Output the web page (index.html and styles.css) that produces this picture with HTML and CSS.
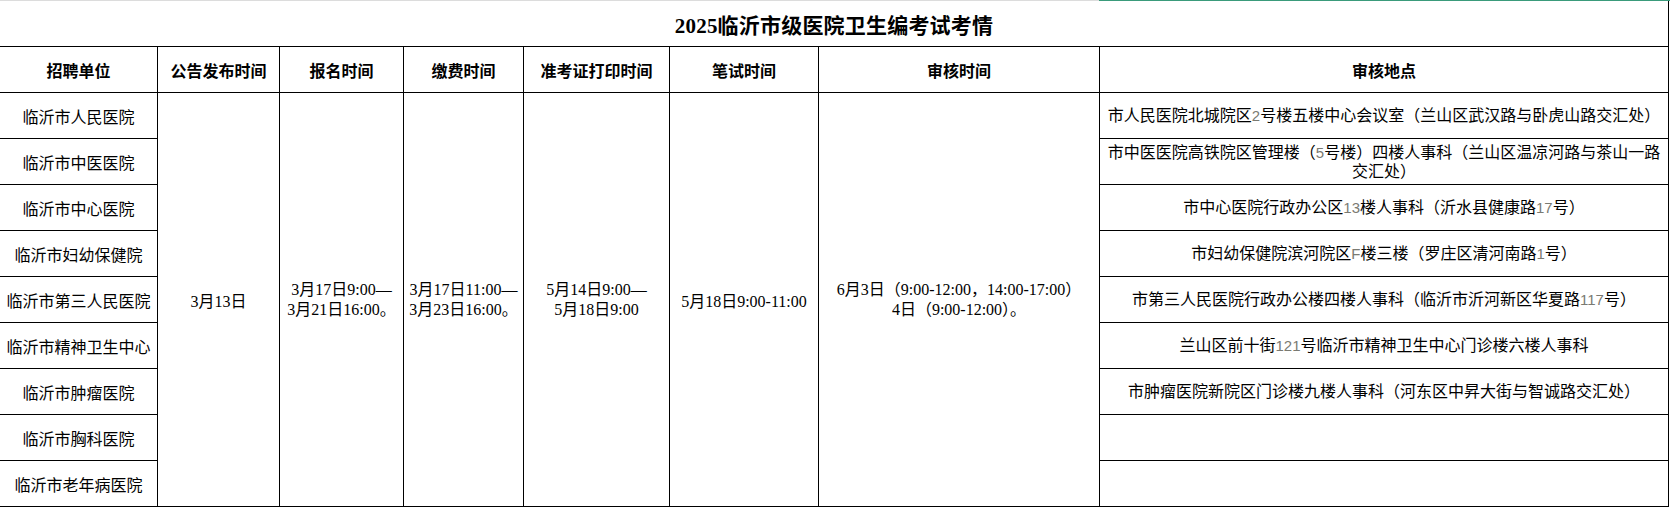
FILE: index.html
```html
<!DOCTYPE html>
<html lang="zh-CN">
<head>
<meta charset="utf-8">
<title>2025临沂市级医院卫生编考试考情</title>
<link rel="stylesheet" href="styles.css">
</head>
<body>
<div class="topbar"><div class="bar-gray"></div><div class="bar-green"></div></div>
<div class="sheet">
  <div class="cell title">2025临沂市级医院卫生编考试考情</div>

  <div class="cell head">招聘单位</div>
  <div class="cell head">公告发布时间</div>
  <div class="cell head">报名时间</div>
  <div class="cell head">缴费时间</div>
  <div class="cell head">准考证打印时间</div>
  <div class="cell head">笔试时间</div>
  <div class="cell head">审核时间</div>
  <div class="cell head">审核地点</div>

  <div class="cell c1">临沂市人民医院</div>
  <div class="cell span c2">3月13日</div>
  <div class="cell span c3 multi"><span class="txt">3月17日9:00—<br>3月21日16:00。</span></div>
  <div class="cell span c4 multi"><span class="txt">3月17日11:00—<br>3月23日16:00。</span></div>
  <div class="cell span c5 multi"><span class="txt">5月14日9:00—<br>5月18日9:00</span></div>
  <div class="cell span c6">5月18日9:00-11:00</div>
  <div class="cell span c7 multi"><span class="txt">6月3日（9:00-12:00，14:00-17:00）<br>4日（9:00-12:00）。</span></div>
  <div class="cell c8 addr"><span class="txt">市人民医院北城院区<span class="num">2</span>号楼五楼中心会议室（兰山区武汉路与卧虎山路交汇处）</span></div>

  <div class="cell c1">临沂市中医医院</div>
  <div class="cell c8 addr"><span class="txt">市中医医院高铁院区管理楼（<span class="num">5</span>号楼）四楼人事科（兰山区温凉河路与茶山一路交汇处）</span></div>

  <div class="cell c1">临沂市中心医院</div>
  <div class="cell c8 addr"><span class="txt">市中心医院行政办公区<span class="num">13</span>楼人事科（沂水县健康路<span class="num">17</span>号）</span></div>

  <div class="cell c1">临沂市妇幼保健院</div>
  <div class="cell c8 addr"><span class="txt">市妇幼保健院滨河院区<span class="num">F</span>楼三楼（罗庄区清河南路<span class="num">1</span>号）</span></div>

  <div class="cell c1">临沂市第三人民医院</div>
  <div class="cell c8 addr"><span class="txt">市第三人民医院行政办公楼四楼人事科（临沂市沂河新区华夏路<span class="num">117</span>号）</span></div>

  <div class="cell c1">临沂市精神卫生中心</div>
  <div class="cell c8 addr"><span class="txt">兰山区前十街<span class="num">121</span>号临沂市精神卫生中心门诊楼六楼人事科</span></div>

  <div class="cell c1">临沂市肿瘤医院</div>
  <div class="cell c8 addr"><span class="txt">市肿瘤医院新院区门诊楼九楼人事科（河东区中昇大街与智诚路交汇处）</span></div>

  <div class="cell c1">临沂市胸科医院</div>
  <div class="cell c8 addr"></div>

  <div class="cell c1">临沂市老年病医院</div>
  <div class="cell c8 addr"></div>
</div>
</body>
</html>
```

FILE: styles.css
```css
* {
  box-sizing: border-box;
}

html, body {
  margin: 0;
  padding: 0;
  background: #ffffff;
}

body {
  width: 1670px;
  height: 507px;
  overflow: hidden;
  font-family: "Liberation Serif", "Noto Sans CJK SC", serif;
  font-size: 16px;
  color: #000000;
}

.topbar {
  display: flex;
  height: 1px;
}

.bar-gray {
  flex: 0 0 1099px;
  background: #dcdcdc;
}

.bar-green {
  flex: 1 1 auto;
  background: #3a9b7b;
}

.sheet {
  display: grid;
  grid-template-columns: 158px 122px 124px 120px 146px 149px 281px 569px;
  grid-template-rows: 46px 46px repeat(9, 46px);
}

.cell {
  border-right: 1px solid #000;
  border-bottom: 1px solid #000;
  display: flex;
  align-items: center;
  justify-content: center;
  text-align: center;
  white-space: nowrap;
}

.txt {
  display: block;
}

.title {
  grid-column: 1 / -1;
  font-family: "Liberation Serif", "Noto Sans CJK SC", serif;
  font-weight: 700;
  font-size: 21px;
  letter-spacing: 0.2px;
}

.head {
  font-family: "Noto Sans CJK SC", sans-serif;
  font-weight: 700;
  font-size: 16px;
}

.c1 { grid-column: 1; }
.c2 { grid-column: 2; }
.c3 { grid-column: 3; }
.c4 { grid-column: 4; }
.c5 { grid-column: 5; }
.c6 { grid-column: 6; }
.c7 { grid-column: 7; }
.c8 { grid-column: 8; }

.span {
  grid-row: 3 / span 9;
}

.multi {
  line-height: 20px;
}

.addr {
  white-space: normal;
  padding: 0 4px;
  line-height: 19px;
}

.num {
  font-family: "Liberation Sans", sans-serif;
  font-size: 15px;
  color: #7a7a72;
}
```
